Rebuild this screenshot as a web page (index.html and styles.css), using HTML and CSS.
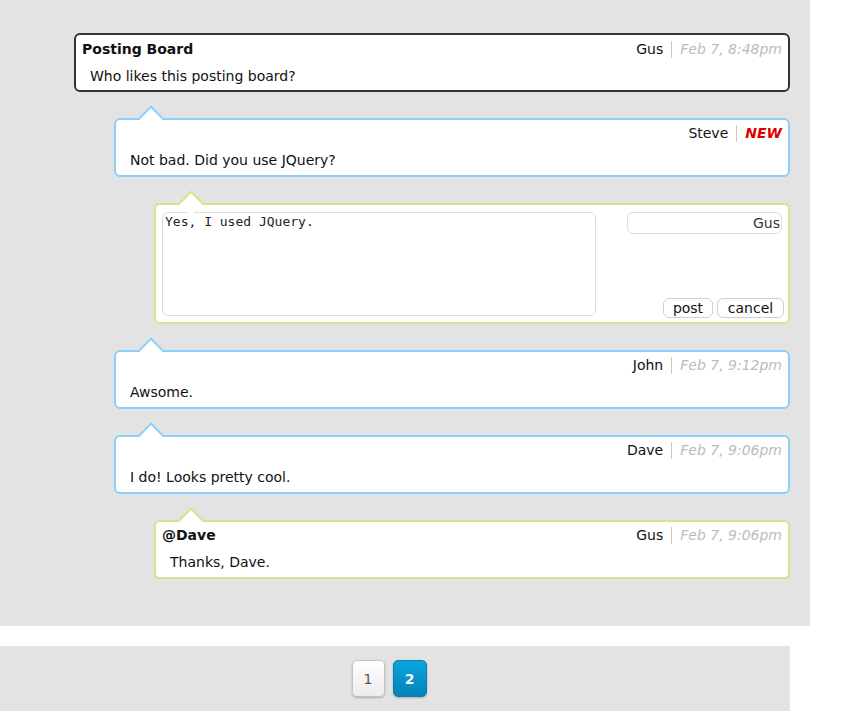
FILE: index.html
```html
<!DOCTYPE html>
<html>
<head>
<meta charset="utf-8">
<link rel="stylesheet" href="styles.css">
</head>
<body>
<div class="board">
  <div class="card dark">
    <div class="head"><span class="title">Posting Board</span><span class="meta"><span class="name">Gus</span><span class="sep"></span><span class="date">Feb 7, 8:48pm</span></span></div>
    <div class="body">Who likes this posting board?</div>
  </div>

  <div class="card blue lvl1">
    <span class="arrow"></span>
    <div class="head"><span class="meta"><span class="name">Steve</span><span class="sep"></span><span class="new">NEW</span></span></div>
    <div class="body">Not bad. Did you use JQuery?</div>
  </div>

  <div class="card green lvl2 form">
    <span class="arrow"></span>
    <textarea class="text">Yes, I used JQuery.</textarea>
    <div class="side">
      <input class="who" type="text" value="Gus">
      <div class="btns"><button class="btn post">post</button><button class="btn cancel">cancel</button></div>
    </div>
  </div>

  <div class="card blue lvl1">
    <span class="arrow"></span>
    <div class="head"><span class="meta"><span class="name">John</span><span class="sep"></span><span class="date">Feb 7, 9:12pm</span></span></div>
    <div class="body">Awsome.</div>
  </div>

  <div class="card blue lvl1">
    <span class="arrow"></span>
    <div class="head"><span class="meta"><span class="name">Dave</span><span class="sep"></span><span class="date">Feb 7, 9:06pm</span></span></div>
    <div class="body">I do! Looks pretty cool.</div>
  </div>

  <div class="card green lvl2">
    <span class="arrow"></span>
    <div class="head"><span class="title">@Dave</span><span class="meta"><span class="name">Gus</span><span class="sep"></span><span class="date">Feb 7, 9:06pm</span></span></div>
    <div class="body">Thanks, Dave.</div>
  </div>
</div>

<div class="pager">
  <span class="page">1</span>
  <span class="page current">2</span>
</div>
</body>
</html>
```

FILE: styles.css
```css
html, body {
  margin: 0;
  padding: 0;
  background: #fff;
  font-family: "DejaVu Sans", Verdana, sans-serif;
  font-size: 14px;
  color: #111;
}

.board {
  width: 810px;
  box-sizing: border-box;
  background: #e3e3e3;
  padding: 33px 20px 47px 74px;
  display: flex;
  flex-direction: column;
  gap: 26px;
}

.card {
  position: relative;
  background: #fff;
  border: 2px solid #333;
  border-radius: 6px;
  padding: 3px 6px 5px 6px;
}

.card.dark { border-color: #333; padding-top: 4px; padding-bottom: 4px; }
.card.blue { border-color: #8ccffb; }
.card.green { border-color: #d6e28e; }

.lvl1 { margin-left: 40px; }
.lvl2 { margin-left: 80px; }

.arrow {
  position: absolute;
  top: -11px;
  left: 26px;
  width: 18px;
  height: 18px;
  box-sizing: border-box;
  background: #fff;
  border-top: 2px solid;
  border-left: 2px solid;
  border-color: inherit;
  transform: rotate(45deg);
}

.head {
  display: flex;
  align-items: center;
  height: 20px;
  line-height: 20px;
}

.title {
  font-weight: bold;
}

.meta {
  margin-left: auto;
  display: flex;
  align-items: center;
}

.sep {
  width: 1px;
  height: 17px;
  background: #c8c8c8;
  margin: 0 8px 0 8px;
}

.date {
  font-style: italic;
  color: #bbb;
}

.new {
  font-style: italic;
  font-weight: bold;
  color: #e00000;
}

.body {
  margin-top: 7px;
  line-height: 20px;
  padding-left: 8px;
}

.card.form {
  display: flex;
  padding: 7px 4px 4px 6px;
}

.text {
  width: 434px;
  height: 104px;
  box-sizing: border-box;
  margin: 0 0 2px 0;
  border: 1px solid #dcdcdc;
  border-radius: 6px;
  padding: 1px 2px;
  resize: none;
  font-family: "DejaVu Sans Mono", monospace;
  font-size: 13px;
  line-height: 16px;
  color: #222;
  outline: none;
}

.side {
  margin-left: auto;
  width: 157px;
  display: flex;
  flex-direction: column;
  justify-content: space-between;
}

.who {
  width: 155px;
  height: 22px;
  box-sizing: border-box;
  border: 1px solid #dcdcdc;
  border-radius: 6px;
  padding: 0 1px 1px 2px;
  text-align: right;
  font-family: "DejaVu Sans", sans-serif;
  font-size: 14px;
  color: #333;
  outline: none;
}

.btns {
  display: flex;
  justify-content: flex-end;
  gap: 4px;
}

.btn {
  height: 20px;
  box-sizing: border-box;
  padding: 0;
  background: #fff;
  border: 1px solid #cfcfcf;
  border-radius: 6px;
  font-family: "DejaVu Sans", sans-serif;
  font-size: 14px;
  line-height: 18px;
  color: #111;
  text-align: center;
}

.btn.post { width: 50px; }
.btn.cancel { width: 67px; }

.pager {
  margin-top: 20px;
  width: 790px;
  box-sizing: border-box;
  background: #e3e3e3;
  padding: 14px 12px 14px 0;
  display: flex;
  justify-content: center;
  gap: 8px;
}

.page {
  width: 33px;
  height: 37px;
  box-sizing: border-box;
  display: flex;
  align-items: center;
  justify-content: center;
  border: 1px solid #c4c4c4;
  border-radius: 5px;
  background: linear-gradient(#ffffff, #ececec);
  box-shadow: 0 1px 2px rgba(0,0,0,0.25);
  color: #555;
  font-size: 14px;
}

.page.current {
  width: 34px;
  border-color: #0a7fae;
  background: linear-gradient(#0aa5dd, #0583b8);
  color: #fff;
  font-weight: bold;
  font-size: 14px;
}
```
